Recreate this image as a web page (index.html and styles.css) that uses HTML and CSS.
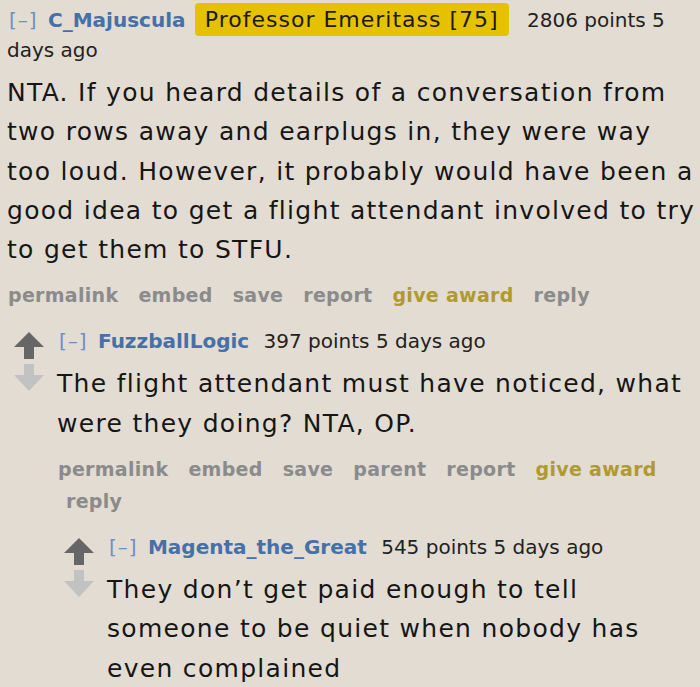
FILE: index.html
```html
<!DOCTYPE html>
<html lang="en">
<head>
<meta charset="utf-8">
<title>Comments</title>
<link rel="stylesheet" href="styles.css">
</head>
<body>
<div class="comment top">
  <div class="entry">
    <p class="tagline"><a class="expand">[–]</a> <a class="author">C_Majuscula</a> <span class="flair">Professor Emeritass [75]</span> <span class="score">2806 points</span> <time>5 days ago</time></p>
    <div class="md"><p>NTA. If you heard details of a conversation from two rows away and earplugs in, they were way too loud. However, it probably would have been a good idea to get a flight attendant involved to try to get them to STFU.</p></div>
    <ul class="buttons">
      <li><a>permalink</a></li>
      <li><a>embed</a></li>
      <li><a>save</a></li>
      <li><a>report</a></li>
      <li><a class="award">give award</a></li>
      <li><a>reply</a></li>
    </ul>
    <div class="child">
      <div class="comment">
        <div class="midcol">
          <svg class="arrow up" width="30" height="27" viewBox="0 0 30 27"><polygon points="15,0 30,15 20,15 20,27 10,27 10,15 0,15"/></svg>
          <svg class="arrow down" width="30" height="27" viewBox="0 0 30 27"><polygon points="10,0 20,0 20,11 30,11 15,27 0,11 10,11"/></svg>
        </div>
        <div class="entry">
          <p class="tagline"><a class="expand">[–]</a> <a class="author">FuzzballLogic</a> <span class="score">397 points</span> <time>5 days ago</time></p>
          <div class="md"><p>The flight attendant must have noticed, what were they doing? NTA, OP.</p></div>
          <ul class="buttons">
            <li><a>permalink</a></li>
            <li><a>embed</a></li>
            <li><a>save</a></li>
            <li><a>parent</a></li>
            <li><a>report</a></li>
            <li><a class="award">give award</a></li>
            <li><a>reply</a></li>
          </ul>
          <div class="child">
            <div class="comment">
              <div class="midcol">
                <svg class="arrow up" width="30" height="27" viewBox="0 0 30 27"><polygon points="15,0 30,15 20,15 20,27 10,27 10,15 0,15"/></svg>
                <svg class="arrow down" width="30" height="27" viewBox="0 0 30 27"><polygon points="10,0 20,0 20,11 30,11 15,27 0,11 10,11"/></svg>
              </div>
              <div class="entry">
                <p class="tagline"><a class="expand">[–]</a> <a class="author">Magenta_the_Great</a> <span class="score">545 points</span> <time>5 days ago</time></p>
                <div class="md"><p>They don’t get paid enough to tell someone to be quiet when nobody has even complained</p></div>
              </div>
            </div>
          </div>
        </div>
      </div>
    </div>
  </div>
</div>
</body>
</html>
```

FILE: styles.css
```css
html, body {
  margin: 0;
  padding: 0;
  background: #e2dcd3;
}
body {
  padding: 5px 0 0 7px;
  font-family: "DejaVu Sans", Verdana, sans-serif;
  color: #1c1c1c;
  overflow: hidden;
}
.comment {
  display: flex;
  align-items: flex-start;
}
.entry {
  flex: 1;
  min-width: 0;
}
.child .entry {
  padding-right: 10px;
}
.tagline {
  margin: 0;
  font-size: 20px;
  line-height: 30px;
  color: #222;
}
.expand {
  color: #6d8fc4;
  letter-spacing: 1px;
  margin-left: 2px;
  margin-right: 4px;
}
.author {
  color: #4670a8;
  font-weight: bold;
}
.score {
  margin-left: 8px;
}
.flair {
  background: #e5c100;
  color: #1a1a10;
  font-size: 22px;
  letter-spacing: 1px;
  padding: 4px 10px;
  border-radius: 4px;
  margin: 0 4px 0 3px;
}
.md p {
  margin: 8px 0 0;
  font-size: 25px;
  line-height: 39.3px;
  letter-spacing: 1.3px;
  color: #161616;
}
.buttons {
  list-style: none;
  margin: 10px 0 0;
  padding: 0 0 0 1px;
  display: flex;
  flex-wrap: wrap;
  column-gap: 12px;
  font-size: 19px;
  line-height: 32px;
  letter-spacing: 0.3px;
  font-weight: bold;
  color: #8b8b8b;
}
.buttons li {
  padding-left: 8px;
}
.buttons li:first-child {
  padding-left: 0;
}
.buttons .award {
  color: #b09a30;
}
.child {
  margin-left: 7px;
  margin-top: 15px;
}
.midcol {
  display: flex;
  flex-direction: column;
  gap: 5px;
  width: 30px;
  margin-right: 13px;
  margin-top: 6px;
}
.arrow.up { fill: #666; }
.arrow.down { fill: #c2c2c2; }
```
